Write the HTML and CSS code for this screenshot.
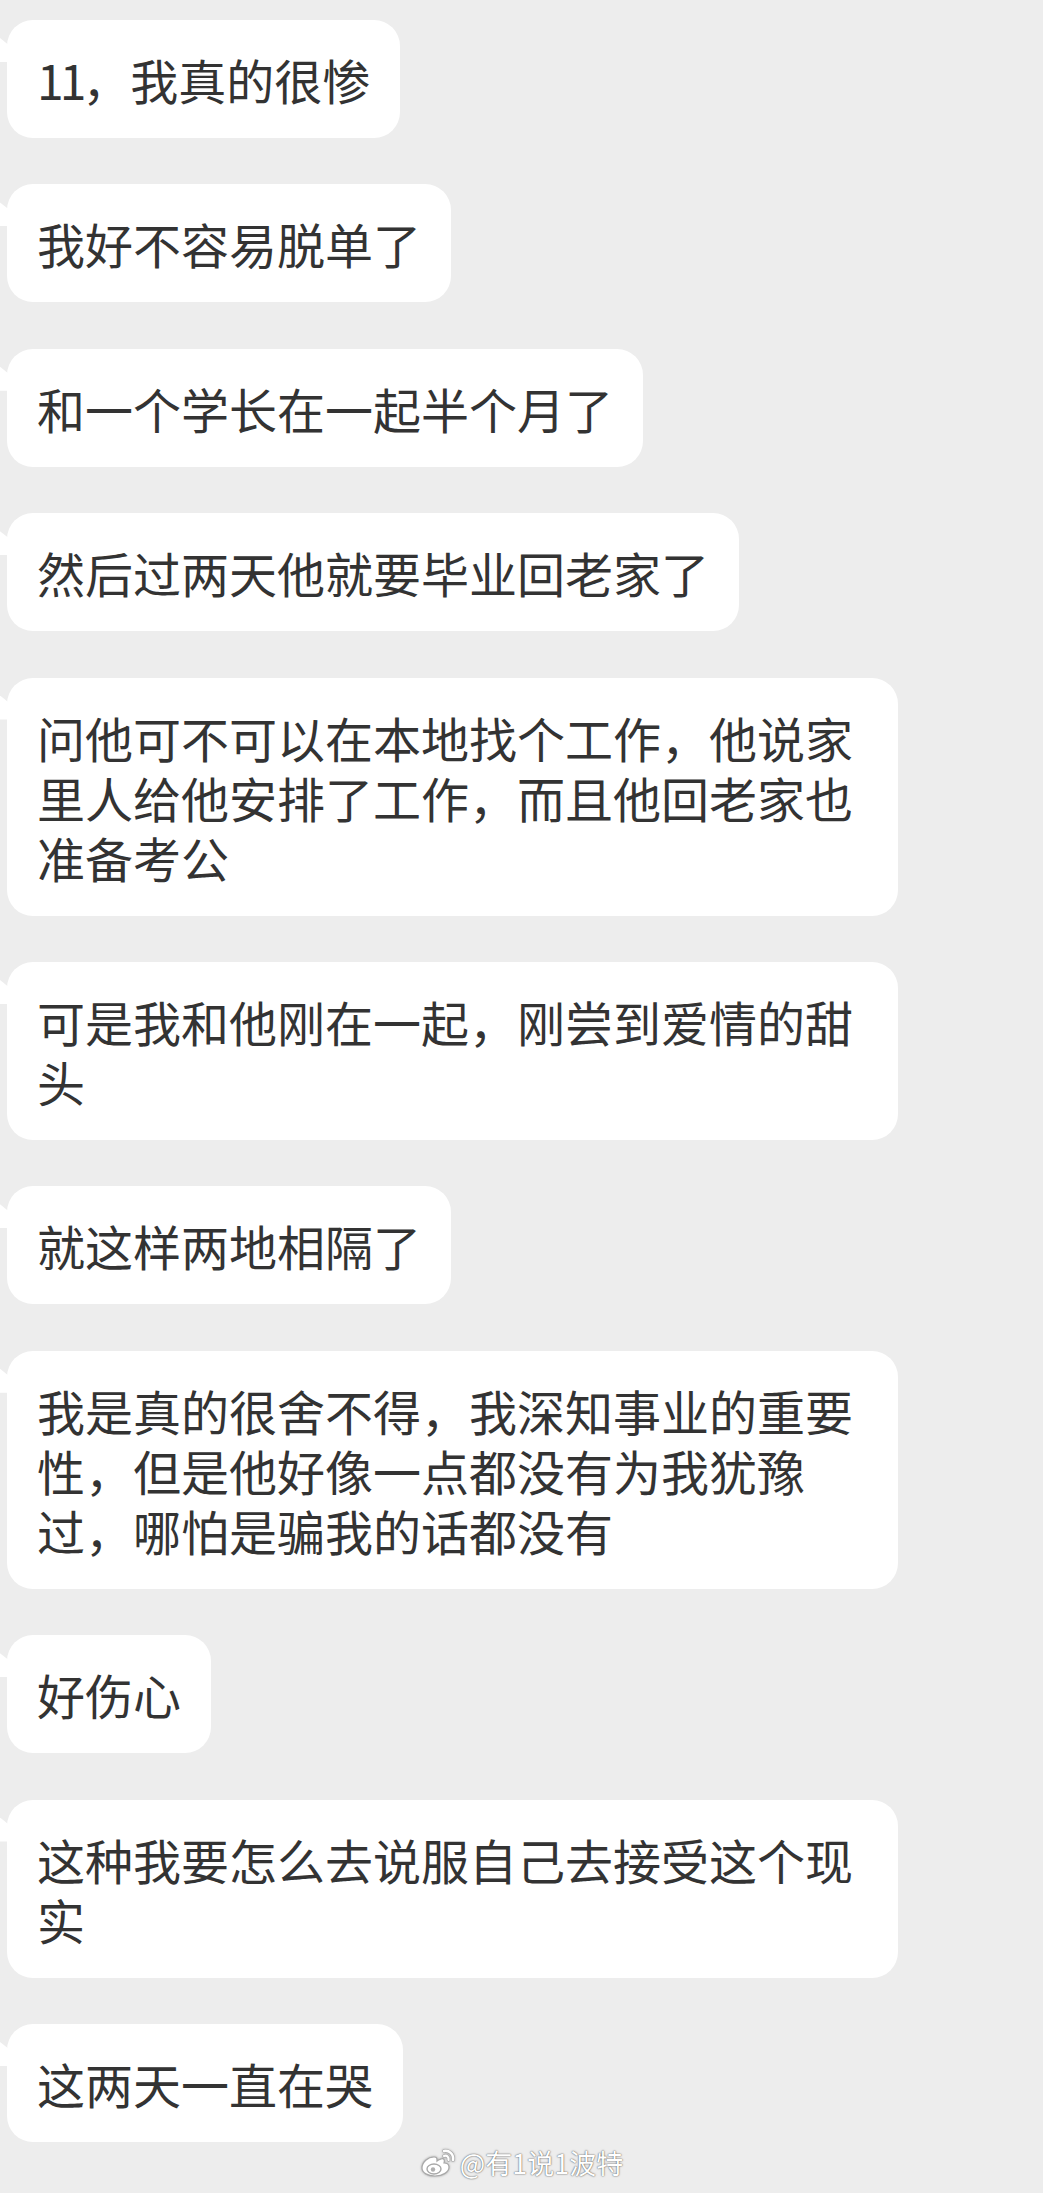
FILE: index.html
```html
<!DOCTYPE html>
<html lang="zh-CN">
<head>
    <meta charset="UTF-8">
    <meta name="viewport" content="width=device-width, initial-scale=1.0">
    <title>聊天记录</title>
    <link rel="stylesheet" href="styles.css">
</head>
<body>

    <main class="chat">
        <div class="bubble"><span class="num">11</span>，我真的很惨</div>
        <div class="bubble">我好不容易脱单了</div>
        <div class="bubble">和一个学长在一起半个月了</div>
        <div class="bubble">然后过两天他就要毕业回老家了</div>
        <div class="bubble">问他可不可以在本地找个工作，他说家里人给他安排了工作，而且他回老家也准备考公</div>
        <div class="bubble">可是我和他刚在一起，刚尝到爱情的甜头</div>
        <div class="bubble">就这样两地相隔了</div>
        <div class="bubble">我是真的很舍不得，我深知事业的重要性，但是他好像一点都没有为我犹豫过，哪怕是骗我的话都没有</div>
        <div class="bubble">好伤心</div>
        <div class="bubble">这种我要怎么去说服自己去接受这个现实</div>
        <div class="bubble">这两天一直在哭</div>
    </main>

    <footer class="watermark">
        <svg class="weibo-logo" width="36" height="30" viewBox="0 0 36 30">
            <!-- body -->
            <path d="M14 9 C8 9 2 14 2 20 C2 25 8 28 15 28 C23 28 29 24 29 19 C29 16 26 15 24 15 C25 12 24 10 21 11 C18 12 17 13 17 13 C17 10 17 9 14 9 Z"
                  fill="#fff" stroke="#a8a8a8" stroke-width="1.2"/>
            <!-- eye -->
            <ellipse cx="14" cy="21" rx="7" ry="5" fill="#fff" stroke="#a8a8a8" stroke-width="1.4"/>
            <circle cx="13" cy="21.5" r="2.2" fill="#b0b0b0"/>
            <!-- signal arcs -->
            <path d="M24 3 C29 2 34 6 33 12" fill="none" stroke="#a8a8a8" stroke-width="3.6" stroke-linecap="round"/>
            <path d="M24 3 C29 2 34 6 33 12" fill="none" stroke="#fff" stroke-width="2.4" stroke-linecap="round"/>
            <path d="M24 8 C27 7 29 9 28.5 12" fill="none" stroke="#a8a8a8" stroke-width="3.4" stroke-linecap="round"/>
            <path d="M24 8 C27 7 29 9 28.5 12" fill="none" stroke="#fff" stroke-width="2.2" stroke-linecap="round"/>
        </svg>
        <span class="watermark-name">@有1说1波特</span>
    </footer>

</body>
</html>
```

FILE: styles.css
```css
/* Page */
body {
    margin: 0;
    padding: 20px 0 0 7px;
    height: 2193px;
    box-sizing: border-box;
    overflow: hidden;
    background-color: #ededed;
    font-family: "Noto Sans CJK SC", "Noto Sans", sans-serif;
    color: #333333;
}

/* Chat column */
.chat {
    display: flex;
    flex-direction: column;
    align-items: flex-start;
    gap: 46.4px;
}

.bubble {
    position: relative;
    max-width: 831px;
    padding: 29px 30px;
    background: #fff;
    border-radius: 26px;
    font-size: 48px;
    line-height: 60px;
    line-break: strict;
}

.num {
    letter-spacing: -4px;
}

/* little tail on the left, mostly cut by the screen edge */
.bubble::before {
    content: "";
    position: absolute;
    left: -7px;
    top: 18px;
    width: 9px;
    height: 24px;
    background: #fff;
    clip-path: polygon(0 0, 100% 30%, 100% 100%, 0 100%);
}

/* Watermark */
.watermark {
    display: flex;
    justify-content: center;
    align-items: center;
    gap: 4px;
    margin-top: 4px;
    padding-right: 7px;
}

.weibo-logo {
    filter: drop-shadow(0 0 1px rgba(0, 0, 0, 0.3));
}

.watermark-name {
    font-size: 27px;
    line-height: 34px;
    color: #fff;
    text-shadow: 0 0 2px rgba(0, 0, 0, 0.55), 0 0 1px rgba(0, 0, 0, 0.45);
}
```
